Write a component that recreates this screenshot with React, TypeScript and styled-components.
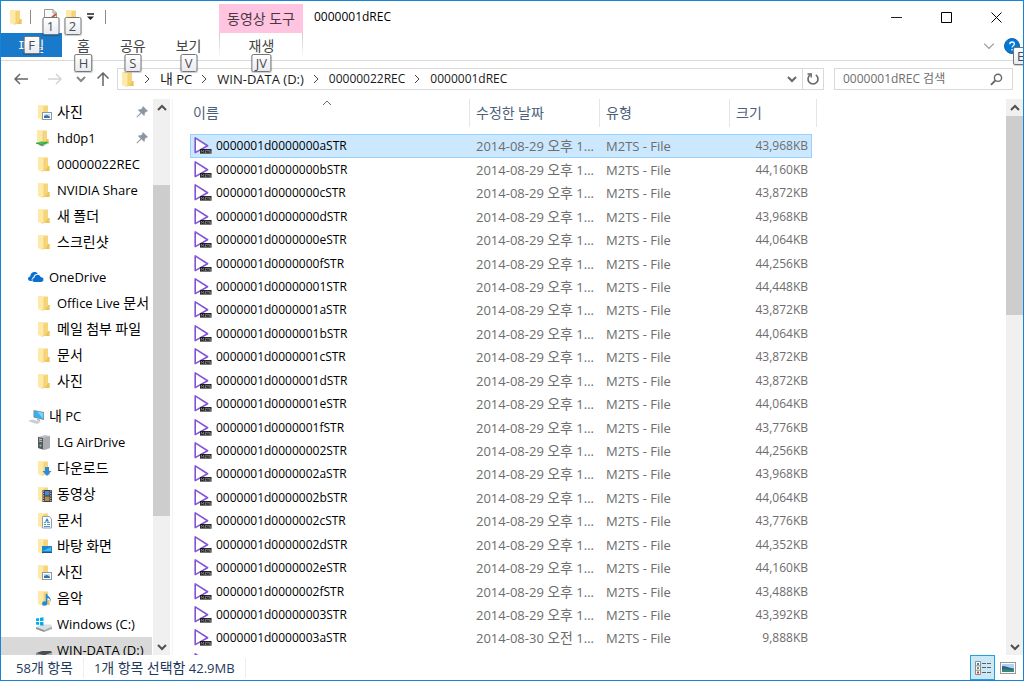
import React from "react";
import styled, { createGlobalStyle, css } from "styled-components";

const Global = createGlobalStyle`
  * { box-sizing: border-box; }
  html, body { margin: 0; padding: 0; }
  body {
    font-family: "Open Sans", "Noto Sans CJK KR", sans-serif;
    font-size: 13px;
    line-height: 20px;
    color: #000;
    background: #fff;
  }
  button, input {
    font: inherit;
    color: inherit;
    border: 0;
    margin: 0;
    padding: 0;
    background: none;
  }
  button { cursor: default; }
  svg { display: block; flex: none; }
`;

/* ---------- text ---------- */

const Hangul = styled.span`
  font-family: "Noto Sans CJK KR", sans-serif;
  font-size: 14px;
  line-height: 1;
`;

/* Hangul runs are set one size larger than the Latin around them. */
function Mixed({ children }: { children: string }) {
  return (
    <span>
      {children
        .split(/([\uac00-\ud7a3]+)/)
        .filter(Boolean)
        .map((run, i) =>
          /[\uac00-\ud7a3]/.test(run) ? (
            <Hangul key={i}>{run}</Hangul>
          ) : (
            <React.Fragment key={i}>{run}</React.Fragment>
          )
        )}
    </span>
  );
}

/* ---------- frame ---------- */

const Window = styled.div`
  display: flex;
  flex-direction: column;
  height: 100vh;
  border: 1px solid #1883d7;
  background: #fff;
  overflow: hidden;
`;

const TitleBar = styled.header`
  display: flex;
  align-items: stretch;
  height: 32px;
`;

const QuickAccess = styled.div`
  display: flex;
  align-items: center;
  width: 218px;
  padding-left: 6px;
`;

const QuickButton = styled.button<{ $gap: number }>`
  position: relative;
  margin-left: ${(p) => p.$gap}px;
`;

const BarLine = styled.span<{ $gap: number }>`
  width: 1px;
  height: 14px;
  margin-left: ${(p) => p.$gap}px;
  background: #8c8c8c;
`;

const ContextLabel = styled.div`
  display: flex;
  align-items: center;
  justify-content: center;
  width: 84px;
  margin-top: 3px;
  background: #ffc4e0;
  color: #4a3743;
`;

const Title = styled.h1`
  flex: 1;
  margin: 0;
  padding: 6px 0 0 11px;
  font-size: 12px;
  font-weight: 400;
  line-height: 20px;
`;

const WindowButtons = styled.div`
  display: flex;
  padding-right: 2px;
`;

const WindowButton = styled.button`
  display: flex;
  align-items: center;
  justify-content: center;
  width: 50px;
`;

const KeyTip = styled.span<{ $top: number }>`
  position: absolute;
  z-index: 2;
  top: ${(p) => p.$top}px;
  left: 50%;
  transform: translateX(-50%);
  min-width: 17px;
  height: 18px;
  padding: 0 3px;
  border: 1px solid #767676;
  border-radius: 2px;
  background: linear-gradient(#fff, #e9ebf3);
  box-shadow: 0 1px 1px rgba(0, 0, 0, 0.2);
  color: #4c4c4c;
  font-size: 13px;
  line-height: 16px;
  text-align: center;
`;

const Ribbon = styled.nav`
  display: flex;
  align-items: flex-start;
  height: 28px;
  border-bottom: 1px solid #dadbdc;
`;

const Tab = styled.button<{ $kind?: "file" | "context" }>`
  position: relative;
  height: 24px;
  padding: 2px 15px 0;
  color: #444;
  ${(p) =>
    p.$kind === "file" &&
    css`
      width: 61px;
      background: #1979ca;
      color: #fff;
    `}
  ${(p) =>
    p.$kind === "context" &&
    css`
      width: 84px;
      margin-left: 3px;
      border: solid transparent;
      border-width: 0 1px;
      border-image: linear-gradient(#c8c8c8, #fff) 1;
    `}
`;

const RibbonTools = styled.div`
  display: flex;
  align-items: center;
  gap: 9px;
  height: 26px;
  margin-left: auto;
  padding-right: 3px;
`;

const RibbonTool = styled.button`
  position: relative;
`;

const HelpTip = styled(KeyTip)`
  left: 9px;
  transform: none;
  text-align: left;
`;

/* ---------- address row ---------- */

const AddressRow = styled.div`
  display: flex;
  align-items: center;
  height: 38px;
  padding: 0 10px 2px 13px;
`;

const NavButton = styled.button<{ $gap: number }>`
  margin-left: ${(p) => p.$gap}px;
`;

const AddressBox = styled.div`
  display: flex;
  align-items: center;
  flex: 1;
  height: 22px;
  margin: 0 10px 0 7px;
  padding-left: 1px;
  border: 1px solid #d9d9d9;
`;

const Crumbs = styled.ol`
  display: flex;
  align-items: center;
  flex: 1;
  margin: 0;
  padding: 0;
  list-style: none;
`;

const Crumb = styled.li`
  display: flex;
  align-items: center;
  & > svg { margin: 0 9px 0 8px; }
  &:first-child > svg { margin-left: 5px; }
`;

const CrumbButton = styled.button<{ $small?: boolean }>`
  font-size: ${(p) => (p.$small ? 12 : 13)}px;
  color: #1a1a1a;
  white-space: nowrap;
`;

const BoxButton = styled.button<{ $line?: boolean }>`
  display: flex;
  align-items: center;
  justify-content: center;
  width: ${(p) => (p.$line ? 21 : 20)}px;
  height: 20px;
  border-left: ${(p) => (p.$line ? "1px solid #d9d9d9" : "0")};
`;

const SearchBox = styled.label`
  display: flex;
  align-items: center;
  width: 179px;
  height: 22px;
  padding: 0 9px 0 8px;
  border: 1px solid #d9d9d9;
`;

const SearchInput = styled.input`
  flex: 1;
  min-width: 0;
  outline: none;
  font-size: 12px;
  &::placeholder { color: #6d6d6d; opacity: 1; }
`;

/* ---------- body ---------- */

const Body = styled.div`
  display: flex;
  flex: 1;
  min-height: 0;
`;

const Sidebar = styled.aside`
  display: flex;
  width: 172px;
  padding-right: 2px;
  border-right: 1px solid #f3f3f3;
`;

const Tree = styled.div`
  display: flex;
  flex-direction: column;
  gap: 9px;
  flex: 1;
  min-width: 0;
  overflow: hidden;
`;

const Group = styled.ul`
  flex: none;
  margin: 0;
  padding: 0;
  list-style: none;
`;

const TreeItem = styled.a<{ $root?: boolean; $selected?: boolean }>`
  display: flex;
  align-items: center;
  gap: 3px;
  height: 26px;
  padding-left: ${(p) => (p.$root ? 26 : 34)}px;
  padding-right: 4px;
  margin-right: 1px;
  background: ${(p) => (p.$selected ? "#d9d9d9" : "transparent")};
  color: #000;
  text-decoration: none;
  white-space: nowrap;
  & > span { flex: 1; }
`;

const Bar = styled.div`
  display: flex;
  flex-direction: column;
  width: 17px;
  background: #f0f0f0;
`;

const BarButton = styled.button`
  display: flex;
  align-items: center;
  justify-content: center;
  height: 17px;
`;

const BarSpace = styled.div<{ $grow: number }>`
  flex: ${(p) => p.$grow} 0 0;
`;

const BarThumb = styled(BarSpace)`
  background: #cdcdcd;
`;

function ScrollBar({ before, thumb, after }: { before: number; thumb: number; after: number }) {
  return (
    <Bar>
      <BarButton aria-label="위로">
        <Chevron dir="up" color="#505050" weight={2} />
      </BarButton>
      <BarSpace $grow={before} />
      <BarThumb $grow={thumb} />
      <BarSpace $grow={after} />
      <BarButton aria-label="아래로">
        <Chevron dir="down" color="#505050" weight={2} />
      </BarButton>
    </Bar>
  );
}

const Content = styled.main`
  flex: 1;
  min-width: 0;
  padding-left: 17px;
  overflow: hidden;
`;

const FileTable = styled.table`
  width: 627px;
  table-layout: fixed;
  border-collapse: separate;
  border-spacing: 0;
`;

const HeadCell = styled.th`
  position: relative;
  height: 28px;
  padding: 0 0 0 6px;
  border-right: 1px solid #e5e5e5;
  color: #4c607a;
  font-weight: 400;
  text-align: left;
  &:first-child { padding-left: 3px; }
`;

const SortMark = styled.span`
  position: absolute;
  top: 0;
  left: 49%;
  transform: translateX(-50%);
`;

const HeadGap = styled.tbody`
  & td { height: 7px; padding: 0; }
`;

const Row = styled.tr<{ $selected?: boolean }>`
  height: 23px;
  &:nth-child(7n + 1), &:nth-child(7n + 3), &:nth-child(7n + 5) { height: 24px; }
  & td {
    padding: 0 0 0 6px;
    border: solid ${(p) => (p.$selected ? "#99d1ff" : "transparent")};
    border-width: 1px 0;
    background: ${(p) => (p.$selected ? "#cce8ff" : "transparent")};
    color: #6d6d6d;
    white-space: nowrap;
    overflow: hidden;
  }
  & td:first-child { padding-left: 2px; border-left-width: 1px; }
  & td:last-child { border-right-width: 1px; }
`;

const Cell = styled.td`
  line-height: 20px;
`;

const NameLine = styled.div`
  display: flex;
  align-items: center;
  gap: 4px;
  color: #000;
  font-size: 12px;
  height: 20px;
`;

const SizeCell = styled(Cell)`
  && { padding-right: 3px; font-size: 12px; text-align: right; }
`;

/* ---------- status bar ---------- */

const StatusBar = styled.footer`
  display: flex;
  align-items: center;
  height: 25px;
  color: #1e395b;
`;

const StatusText = styled.div`
  display: flex;
  align-items: center;
  height: 20px;
  padding: 0 10px;
  border-right: 1px solid #efefef;
  &:first-child { padding-left: 15px; }
`;

const ViewButtons = styled.div`
  display: flex;
  margin-left: auto;
  padding-right: 3px;
`;

const ViewButton = styled.button<{ $active?: boolean }>`
  display: flex;
  align-items: center;
  justify-content: center;
  width: 25px;
  height: 25px;
  border: 1px solid ${(p) => (p.$active ? "#26a0da" : "transparent")};
  background: ${(p) => (p.$active ? "#cbe8f6" : "transparent")};
`;

/* ---------- icons ---------- */

function Chevron({
  dir,
  color = "#666",
  weight = 1,
  size = 8,
}: {
  dir: "up" | "down" | "right";
  color?: string;
  weight?: number;
  size?: number;
}) {
  const d = { up: "M1 6l4-4 4 4", down: "M1 2l4 4 4-4", right: "M3 0l4 4-4 4" }[dir];
  const wide = dir !== "right";
  return (
    <svg width={wide ? size + 2 : 8} height={size} viewBox={wide ? "0 0 10 8" : "1 0 8 8"}>
      <path d={d} fill="none" stroke={color} strokeWidth={weight} />
    </svg>
  );
}

const FolderShape = () => (
  <>
    <path d="M5 1.500h7v9h1.500v4.500H5z" fill="#f6d67c" />
    <path d="M12 10h1.500v5H9z" fill="#edc35c" />
    <path d="M2 1h3l3 1.500V14l-1.500 2L2 14z" fill="#ffe9a6" />
    <path d="M6.500 16L8 14V3" fill="none" stroke="#e8c468" strokeWidth=".6" />
  </>
);

type IconName =
  | "folder" | "pictures" | "network" | "onedrive" | "pc" | "server"
  | "download" | "video" | "document" | "desktop" | "music" | "windrive" | "drive";

function Icon({ name }: { name: IconName }) {
  const isFolder = ["folder", "pictures", "network", "download", "video", "document", "desktop", "music"].includes(name);
  return (
    <svg width="19" height="17" viewBox="0 0 19 17">
      {isFolder && (
        <g transform={name === "network" ? "translate(0 -1)" : "translate(1 0)"}>
          <FolderShape />
        </g>
      )}
      {name === "pictures" && (
        <>
          <rect x="7.500" y="8.500" width="9" height="7" fill="#fff" stroke="#8b98a5" />
          <rect x="9" y="10" width="6" height="4" fill="#b9ddf3" />
          <path d="M9 14v-2l3-1 3 2v1z" fill="#3a6ea5" />
        </>
      )}
      {name === "network" && (
        <>
          <path d="M1 13l5-1.500 8 .5-3 2-5 1z" fill="#3fbf55" />
          <path d="M3 14.500l4 2 5-2z" fill="#9aa3a0" />
          <path d="M1 13l6 2 5-3" fill="none" stroke="#2f9b44" />
        </>
      )}
      {name === "onedrive" && (
        <g fill="#0a6fd1">
          <path d="M5 12H3.500C1.800 12 1 11 1 9.800 1 8.500 2 7.600 3.200 7.500 3.300 5 5 3 7.500 3c1.500 0 2.700.6 3.400 1.700C8.500 4.500 6.800 6 6.500 8 4.800 8.500 4.300 10.500 5 12z" />
          <path d="M7.500 13C6 13 5.300 12 5.300 11c0-1.300 1-2.100 2-2.100C7.500 7 8.800 5.700 10.500 5.700c1.500 0 2.500.8 3 2.300 1.800 0 3 1 3 2.600 0 1.500-1 2.400-2.500 2.400z" />
        </g>
      )}
      {name === "pc" && (
        <>
          <path d="M6.500 2L17 4v8L6.500 9.500z" fill="#7d8a94" />
          <path d="M7.300 3L16.200 4.800v6.300L7.300 9z" fill="#35b0f0" />
          <path d="M10 3.600l6.200 1.200v6.300z" fill="#7fd0fa" />
          <path d="M1 13l4-1.500 9 2.500-4 2z" fill="#c9cdd1" />
          <path d="M10 11l3 .8V13l-3-.7z" fill="#99a1a8" />
        </>
      )}
      {name === "server" && (
        <>
          <path d="M3 3l7-2 5 1v12l-5 2-7-2z" fill="#bfc1c4" />
          <path d="M3 3l5 1v11.500L3 14z" fill="#565a5e" />
          <path d="M8 4l7-2v12l-7 2z" fill="#a9acb0" />
          <path d="M4 5l3 .5M4 7l3 .5" stroke="#d4d4d4" />
          <circle cx="5.500" cy="11.500" r=".9" fill="#7ee07e" />
        </>
      )}
      {name === "download" && <path d="M10 7h4v4h2.500L12 16l-4.500-5H10z" fill="#2b8be0" />}
      {name === "video" && (
        <>
          <rect x="7.500" y="4" width="9.500" height="12" fill="#3a3a3e" />
          <rect x="10" y="5" width="4.500" height="4.500" fill="#4a86cc" />
          <rect x="10" y="10.500" width="4.500" height="4.500" fill="#b08d4a" />
          <path d="M8.700 4.500v11M15.800 4.500v11" stroke="#e8e8e8" strokeDasharray="1.200 1.200" />
        </>
      )}
      {name === "document" && (
        <>
          <path d="M7.500 4.500h7l2 2.500v9h-9z" fill="#fff" stroke="#93a0ac" />
          <path d="M9 10.500h2M12 10.500h3M9 12.500h2M12 12.500h3M9 14.500h6" stroke="#4d94cf" />
          <path d="M12 6l2 3.500h-4z" fill="#2f7fc4" />
        </>
      )}
      {name === "desktop" && (
        <>
          <rect x="7" y="8" width="10" height="6" fill="#1688d6" />
          <path d="M7 14.500h10" stroke="#15577f" />
          <path d="M8 13l8-4v4z" fill="#4fb4f0" />
        </>
      )}
      {name === "music" && (
        <>
          <path d="M11.500 4v9" stroke="#1b8ae0" strokeWidth="1.600" />
          <path d="M11 3c.5 3 5.500 3.500 5 9-.8-3-2.500-4-5-4.200z" fill="#1b8ae0" />
          <ellipse cx="9.600" cy="13.500" rx="2.600" ry="2.200" fill="#1b8ae0" />
        </>
      )}
      {(name === "windrive" || name === "drive") && (
        <>
          <path d="M1 11l6-2.500h9l1 2-8 3.500z" fill="#dcdfe1" />
          <path d="M1 11l8 3v2L1 13z" fill="#8d9398" />
          <path d="M9 14l8-3.500V13l-8 3z" fill="#a9aeb2" />
        </>
      )}
      {name === "drive" && <path d="M1 11l6-2h9l1 1.500-8 3z" fill="#4b4e51" />}
      {name === "windrive" && (
        <path d="M1 2.500L4 2v3H1zM5 1.800L8.500 1.300V5H5zM1 6h3v3L1 8.500zM5 6h3.500v3.700L5 9.200z" fill="#00adef" />
      )}
    </svg>
  );
}

const PinIcon = () => (
  <svg width="12" height="12" viewBox="0 0 12 12">
    <path d="M7 .5L11.500 5l-1.500.5L8.500 7l-.3 2.500L5.500 7 1 11.200.8 11 5 6.500 2.300 4l2.900-.5L6.600 2z" fill="#8a97a3" stroke="#8a97a3" strokeWidth=".7" />
  </svg>
);

const VideoFileIcon = () => (
  <svg width="19" height="18" viewBox="0 0 19 18">
    <path d="M2.200 .9V15.600L14.600 8.700z" fill="#fff" stroke="#8552d6" strokeWidth="1.600" strokeLinejoin="round" />
    <rect x="7" y="12" width="11.500" height="4.600" fill="#1c1c1c" />
    <path d="M8.300 15.700v-2.400l1.200 1.200 1.200-1.200v2.400M12 13.300h1.500l-1.500 2.200h1.500M14.300 13.300h1.500M15 13.300v2.400M17.500 13.300h-1v1.100h1v1.200h-1.200" fill="none" stroke="#c8c8c8" strokeWidth=".5" />
  </svg>
);

const SearchIcon = () => (
  <svg width="13" height="13" viewBox="0 0 13 13" fill="none" stroke="#666">
    <circle cx="8" cy="4.800" r="3.600" strokeWidth="1.400" />
    <path d="M5.400 7.400L1 11.800" strokeWidth="1.900" />
  </svg>
);

const RefreshIcon = () => (
  <svg width="14" height="14" viewBox="0 0 14 14" fill="none" stroke="#666">
    <path d="M4.200 2.800a5 5 0 1 0 5.600 0" strokeWidth="1.600" />
    <path d="M1.500 2h3.700v3.600" strokeWidth="1.400" />
  </svg>
);

const ArrowIcon = ({ d, color }: { d: string; color: string }) => (
  <svg width="14" height="14" viewBox="0 0 14 14">
    <path d={d} fill="none" stroke={color} strokeWidth="1.500" />
  </svg>
);

const PropertiesIcon = () => (
  <svg width="15" height="16" viewBox="0 0 15 16">
    <path d="M1.500.5h8.500l3.500 3.500v11.500h-12z" fill="#fbfbfb" stroke="#9a9a9a" />
    <path d="M10 .5V4h3.500" fill="none" stroke="#9a9a9a" />
    <path d="M9 8.500l4-3.500" stroke="#d3562a" strokeWidth="2" />
  </svg>
);

const DetailsIcon = () => (
  <svg width="16" height="14" viewBox="0 0 16 14">
    <path d="M.5.5h5v13h-5zM.5 4.800h5M.5 9.200h5" fill="#fff" stroke="#8c8c8c" />
    <rect x="2" y="2" width="2" height="2" fill="#3a7bc4" />
    <rect x="2" y="6" width="2" height="2" fill="#6f9a3a" />
    <rect x="2" y="10.500" width="2" height="2" fill="#d0352a" />
    <path d="M7 2.500h4M12 2.500h4M7 6.500h4M12 6.500h4M7 11.500h4M12 11.500h4" stroke="#5f5f5f" />
  </svg>
);

const LargeIcon = () => (
  <svg width="16" height="12" viewBox="0 0 16 12">
    <rect x=".5" y=".5" width="15" height="11" fill="#fff" stroke="#9a9a9a" />
    <rect x="2" y="2" width="12" height="8" fill="#a9d4f2" />
    <path d="M2 4c4 0 7 2 12 2.500V8H2z" fill="#2d5f97" />
    <path d="M2 7.500c4-.5 8 .5 12 0V10H2z" fill="#3c8a6a" />
  </svg>
);

/* ---------- data ---------- */

type Node = { icon: IconName; label: string; pinned?: boolean; root?: boolean; selected?: boolean };

const TREE: Node[][] = [
  [
    { icon: "pictures", label: "사진", pinned: true },
    { icon: "network", label: "hd0p1", pinned: true },
    { icon: "folder", label: "00000022REC" },
    { icon: "folder", label: "NVIDIA Share" },
    { icon: "folder", label: "새 폴더" },
    { icon: "folder", label: "스크린샷" },
  ],
  [
    { icon: "onedrive", label: "OneDrive", root: true },
    { icon: "folder", label: "Office Live 문서" },
    { icon: "folder", label: "메일 첨부 파일" },
    { icon: "folder", label: "문서" },
    { icon: "folder", label: "사진" },
  ],
  [
    { icon: "pc", label: "내 PC", root: true },
    { icon: "server", label: "LG AirDrive" },
    { icon: "download", label: "다운로드" },
    { icon: "video", label: "동영상" },
    { icon: "document", label: "문서" },
    { icon: "desktop", label: "바탕 화면" },
    { icon: "pictures", label: "사진" },
    { icon: "music", label: "음악" },
    { icon: "windrive", label: "Windows (C:)" },
    { icon: "drive", label: "WIN-DATA (D:)", selected: true },
  ],
];

const AUG = "2014-08-29 오후 1...";

const FILES: [string, string, string][] = [
  ["0000001d0000000aSTR", AUG, "43,968KB"],
  ["0000001d0000000bSTR", AUG, "44,160KB"],
  ["0000001d0000000cSTR", AUG, "43,872KB"],
  ["0000001d0000000dSTR", AUG, "43,968KB"],
  ["0000001d0000000eSTR", AUG, "44,064KB"],
  ["0000001d0000000fSTR", AUG, "44,256KB"],
  ["0000001d00000001STR", AUG, "44,448KB"],
  ["0000001d0000001aSTR", AUG, "43,872KB"],
  ["0000001d0000001bSTR", AUG, "44,064KB"],
  ["0000001d0000001cSTR", AUG, "43,872KB"],
  ["0000001d0000001dSTR", AUG, "43,872KB"],
  ["0000001d0000001eSTR", AUG, "44,064KB"],
  ["0000001d0000001fSTR", AUG, "43,776KB"],
  ["0000001d00000002STR", AUG, "44,256KB"],
  ["0000001d0000002aSTR", AUG, "43,968KB"],
  ["0000001d0000002bSTR", AUG, "44,064KB"],
  ["0000001d0000002cSTR", AUG, "43,776KB"],
  ["0000001d0000002dSTR", AUG, "44,352KB"],
  ["0000001d0000002eSTR", AUG, "44,160KB"],
  ["0000001d0000002fSTR", AUG, "43,488KB"],
  ["0000001d00000003STR", AUG, "43,392KB"],
  ["0000001d0000003aSTR", "2014-08-30 오전 1...", "9,888KB"],
];

const CRUMBS = ["내 PC", "WIN-DATA (D:)", "00000022REC", "0000001dREC"];

export default function App() {
  return (
    <>
      <Global />
      <Window>
        <TitleBar>
          <QuickAccess>
            <Icon name="folder" />
            <BarLine $gap={4} />
            <QuickButton $gap={12} aria-label="속성">
              <PropertiesIcon />
              <KeyTip $top={8}>1</KeyTip>
            </QuickButton>
            <QuickButton $gap={5} aria-label="새 폴더">
              <Icon name="folder" />
              <KeyTip $top={8}>2</KeyTip>
            </QuickButton>
            <QuickButton $gap={4} aria-label="빠른 실행 도구 모음 사용자 지정">
              <svg width="9" height="8" viewBox="0 0 9 8">
                <path d="M1 1h7" stroke="#222" strokeWidth="1.500" />
                <path d="M1 3.500h7L4.500 7z" fill="#222" />
              </svg>
            </QuickButton>
            <BarLine $gap={10} />
          </QuickAccess>
          <ContextLabel>
            <Mixed>동영상 도구</Mixed>
          </ContextLabel>
          <Title>0000001dREC</Title>
          <WindowButtons>
            <WindowButton aria-label="최소화">
              <svg width="11" height="11" viewBox="0 0 11 11"><path d="M0 5.500h11" stroke="#222" /></svg>
            </WindowButton>
            <WindowButton aria-label="최대화">
              <svg width="11" height="11" viewBox="0 0 11 11"><path d="M.5.5h10v10H.5z" fill="none" stroke="#000" /></svg>
            </WindowButton>
            <WindowButton aria-label="닫기">
              <svg width="11" height="11" viewBox="0 0 11 11"><path d="M.5.5l10 10M10.500.5l-10 10" stroke="#000" /></svg>
            </WindowButton>
          </WindowButtons>
        </TitleBar>

        <Ribbon>
          <Tab $kind="file"><Mixed>파일</Mixed><KeyTip $top={3}>F</KeyTip></Tab>
          <Tab><Mixed>홈</Mixed><KeyTip $top={21}>H</KeyTip></Tab>
          <Tab><Mixed>공유</Mixed><KeyTip $top={21}>S</KeyTip></Tab>
          <Tab><Mixed>보기</Mixed><KeyTip $top={21}>V</KeyTip></Tab>
          <Tab $kind="context"><Mixed>재생</Mixed><KeyTip $top={21}>JV</KeyTip></Tab>
          <RibbonTools>
            <RibbonTool aria-label="리본 확장"><Chevron dir="down" color="#999" size={10} /></RibbonTool>
            <RibbonTool aria-label="도움말">
              <svg width="16" height="16" viewBox="0 0 16 16">
                <circle cx="8" cy="8" r="7.500" fill="#0078d7" stroke="#1b5fa5" />
                <path d="M5.800 6.200c0-3 4.600-2.800 4.600-.2C10.400 7.600 8 7.800 8 9.600M8 11v1.500" fill="none" stroke="#fff" strokeWidth="1.300" />
              </svg>
              <HelpTip $top={9}>E</HelpTip>
            </RibbonTool>
          </RibbonTools>
        </Ribbon>

        <AddressRow>
          <NavButton $gap={0} aria-label="뒤로"><ArrowIcon d="M14 7H1M6 2L1 7l5 5" color="#666" /></NavButton>
          <NavButton $gap={20} aria-label="앞으로"><ArrowIcon d="M0 7h13M8 2l5 5-5 5" color="#d4d4d4" /></NavButton>
          <NavButton $gap={14} aria-label="최근 위치"><Chevron dir="down" weight={2} color="#888" /></NavButton>
          <NavButton $gap={10} aria-label="상위 폴더"><ArrowIcon d="M7 14V1M1.500 6.500L7 1l5.500 5.500" color="#666" /></NavButton>
          <AddressBox>
            <Icon name="folder" />
            <Crumbs>
              {CRUMBS.map((c) => (
                <Crumb key={c}>
                  <Chevron dir="right" color="#444" />
                  <CrumbButton $small={/^0/.test(c)}><Mixed>{c}</Mixed></CrumbButton>
                </Crumb>
              ))}
            </Crumbs>
            <BoxButton aria-label="이전 위치"><Chevron dir="down" weight={2} /></BoxButton>
            <BoxButton $line aria-label="새로 고침"><RefreshIcon /></BoxButton>
          </AddressBox>
          <SearchBox>
            <SearchInput type="text" placeholder="0000001dREC 검색" aria-label="0000001dREC 검색" />
            <SearchIcon />
          </SearchBox>
        </AddressRow>

        <Body>
          <Sidebar>
            <Tree>
              {TREE.map((group, g) => (
                <Group key={g}>
                  {group.map((n) => (
                    <li key={n.label}>
                      <TreeItem href="#" $root={n.root} $selected={n.selected}>
                        <Icon name={n.icon} />
                        <Mixed>{n.label}</Mixed>
                        {n.pinned && <PinIcon />}
                      </TreeItem>
                    </li>
                  ))}
                </Group>
              ))}
            </Tree>
            <ScrollBar before={69} thumb={331} after={122} />
          </Sidebar>

          <Content>
            <FileTable>
              <colgroup>
                <col width={280} />
                <col width={130} />
                <col width={130} />
                <col width={82} />
                <col width={5} />
              </colgroup>
              <thead>
                <tr>
                  <HeadCell>
                    <Mixed>이름</Mixed>
                    <SortMark><Chevron dir="up" /></SortMark>
                  </HeadCell>
                  <HeadCell><Mixed>수정한 날짜</Mixed></HeadCell>
                  <HeadCell><Mixed>유형</Mixed></HeadCell>
                  <HeadCell colSpan={2}><Mixed>크기</Mixed></HeadCell>
                </tr>
              </thead>
              <HeadGap><tr><td colSpan={5} /></tr></HeadGap>
              <tbody>
                {FILES.map(([name, date, size], i) => (
                  <Row key={name} $selected={i === 0}>
                    <Cell><NameLine><VideoFileIcon />{name}</NameLine></Cell>
                    <Cell><Mixed>{date}</Mixed></Cell>
                    <Cell>M2TS - File</Cell>
                    <SizeCell>{size}</SizeCell>
                  </Row>
                ))}
                <Row>
                  <Cell><NameLine><VideoFileIcon /></NameLine></Cell>
                </Row>
              </tbody>
            </FileTable>
          </Content>
          <ScrollBar before={0} thumb={199} after={322} />
        </Body>

        <StatusBar>
          <StatusText><Mixed>58개 항목</Mixed></StatusText>
          <StatusText><Mixed>1개 항목 선택함 42.9MB</Mixed></StatusText>
          <ViewButtons>
            <ViewButton $active aria-label="자세히"><DetailsIcon /></ViewButton>
            <ViewButton aria-label="큰 아이콘"><LargeIcon /></ViewButton>
          </ViewButtons>
        </StatusBar>
      </Window>
    </>
  );
}
